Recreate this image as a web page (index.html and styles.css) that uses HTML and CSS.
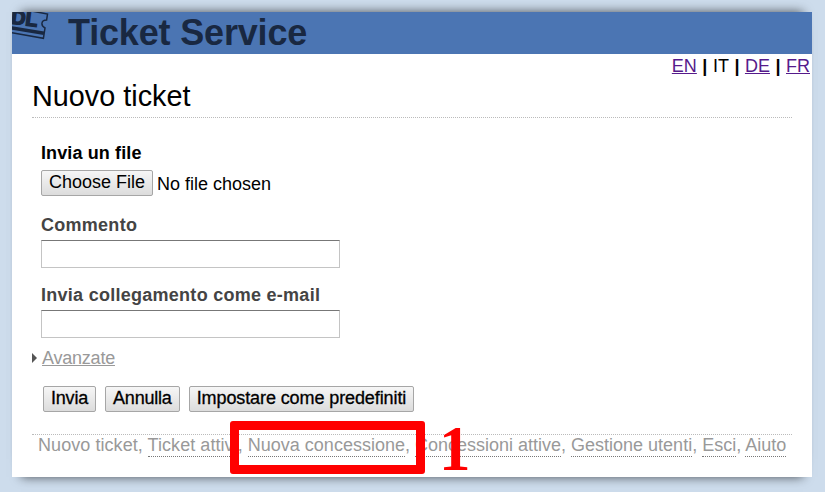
FILE: index.html
```html
<!DOCTYPE html>
<html lang="it">
<head>
<meta charset="utf-8">
<title>Ticket Service</title>
<link rel="stylesheet" href="styles.css">
</head>
<body>
<div class="page">
  <header class="banner">
    <svg class="logo" width="38" height="30" viewBox="0 0 38 30" aria-hidden="true">
      <g fill="none" stroke="#192841" stroke-width="1.5">
        <path d="M-2 -5L35.500 2L34.600 8Q30.500 8 30 11Q29.500 14 33 16L31.400 26.300L-2 20.500"/>
        <path d="M-2 15.700L32 21.200" stroke-width="3.400"/>
      </g>
      <text class="logo-text" transform="translate(-1.500 11.500) rotate(7)">DL</text>
    </svg>
    <h1>Ticket Service</h1>
  </header>
  <nav class="languages"><a href="#">EN</a><b>|</b><span>IT</span><b>|</b><a href="#">DE</a><b>|</b><a href="#">FR</a></nav>
  <main>
    <h2>Nuovo ticket</h2>
    <form>
      <div class="label upload">Invia un file</div>
      <div class="file"><button type="button">Choose File</button><span>No file chosen</span></div>
      <label class="label wide" for="comment">Commento</label>
      <input id="comment" type="text">
      <label class="label wide second" for="mail">Invia collegamento come e-mail</label>
      <input id="mail" type="text">
      <div class="advanced"><i></i><a href="#">Avanzate</a></div>
      <div class="actions"><button type="button">Invia</button><button type="button">Annulla</button><button type="button" class="default">Impostare come predefiniti</button></div>
    </form>
    <footer><span class="loose">Nuovo ticket, <a href="#">Ticket attivi</a>, </span><a href="#">Nuova concessione</a>, <a href="#">Concessioni attive</a>, <a href="#">Gestione utenti</a>, <a href="#">Esci</a>, <a href="#">Aiuto</a></footer>
  </main>
  <div class="callout"></div>
  <div class="number">1</div>
</div>
</body>
</html>
```
FILE: styles.css
```css
* { box-sizing: border-box; }
body {
  margin: 0;
  padding: 12px;
  height: 492px;
  overflow: hidden;
  background: #cddcec;
  font: 18px/20px "Liberation Sans", Arial, sans-serif;
  color: #000;
}
.page {
  position: relative;
  width: 800px;
  height: 465px;
  background: #fff;
  box-shadow: 0 -9px 10px -9px rgba(0,0,0,.65), 0 9px 10px -9px rgba(0,0,0,.65);
}
.banner {
  display: flex;
  height: 42px;
  background: #4b75b3;
  color: #192841;
}
.logo { flex: none; overflow: hidden; }
.logo-text { font: bold 20px "Liberation Sans", Arial, sans-serif; fill: #192841; stroke: #192841; stroke-width: 1.4px; }
h1 { margin: 0 0 0 18px; font-size: 36px; line-height: 42px; letter-spacing: -.17px; }
.languages {
  display: flex;
  justify-content: flex-end;
  height: 24px;
  padding: 2px 2px 0 0;
}
.languages b { margin: 0 5.5px; font-weight: bold; }
.languages a { color: #551a8b; }
main { padding: 0 20px; }
h2 {
  margin: 0;
  height: 40px;
  border-bottom: 1px dotted #bbb;
  font-size: 28.8px;
  font-weight: normal;
  line-height: 36px;
}
form { padding-left: 9px; }
.label { display: block; font-weight: bold; color: #444; }
.upload { margin-top: 25px; color: #000; letter-spacing: .12px; }
.wide { margin-top: 19px; letter-spacing: .27px; }
.wide.second { margin-top: 17px; }
button {
  height: 26px;
  padding: 0 7px 3px;
  border: 1px solid #a6a6a6;
  border-radius: 2px;
  background: linear-gradient(#f6f6f6, #dcdcdc);
  font: 18px/20px "Liberation Sans", Arial, sans-serif;
  color: #000;
}
.file { display: flex; gap: 4px; align-items: center; margin-top: 7px; height: 26px; }
.file span { padding-top: 2px; }
input {
  display: block;
  width: 299px;
  height: 28px;
  margin-top: 5px;
  border: 1px solid #c4c4c4;
  border-top: 1px solid #777;
  background: #fff;
}
.advanced { display: flex; align-items: center; margin: 10px 0 0 -9px; height: 20px; }
.advanced i {
  margin-right: 5px;
  border-left: 5px solid #555;
  border-top: 5px solid transparent;
  border-bottom: 5px solid transparent;
}
.advanced a { color: #999; letter-spacing: -.22px; }
.actions { display: flex; gap: 9px; margin: 18px 0 0 2px; }
.actions button { -webkit-text-stroke: .3px #000; letter-spacing: -.2px; }
.actions .default { letter-spacing: -.1px; }
footer {
  margin-top: 22px;
  border-top: 1px dotted #bbb;
  padding-left: 6px;
  color: #999;
  white-space: nowrap;
}
.loose { letter-spacing: .06px; }
footer a { color: #999; text-decoration: none; border-bottom: 1px dotted #777; padding-bottom: 1px; }
.callout {
  position: absolute;
  left: 218px;
  top: 409px;
  width: 195px;
  height: 53px;
  border: 9px solid #f00;
  border-radius: 3px;
}
.number {
  position: absolute;
  left: 427px;
  top: 404px;
  font: bold 63px/66px "Liberation Serif", serif;
  color: #f00;
}
```
